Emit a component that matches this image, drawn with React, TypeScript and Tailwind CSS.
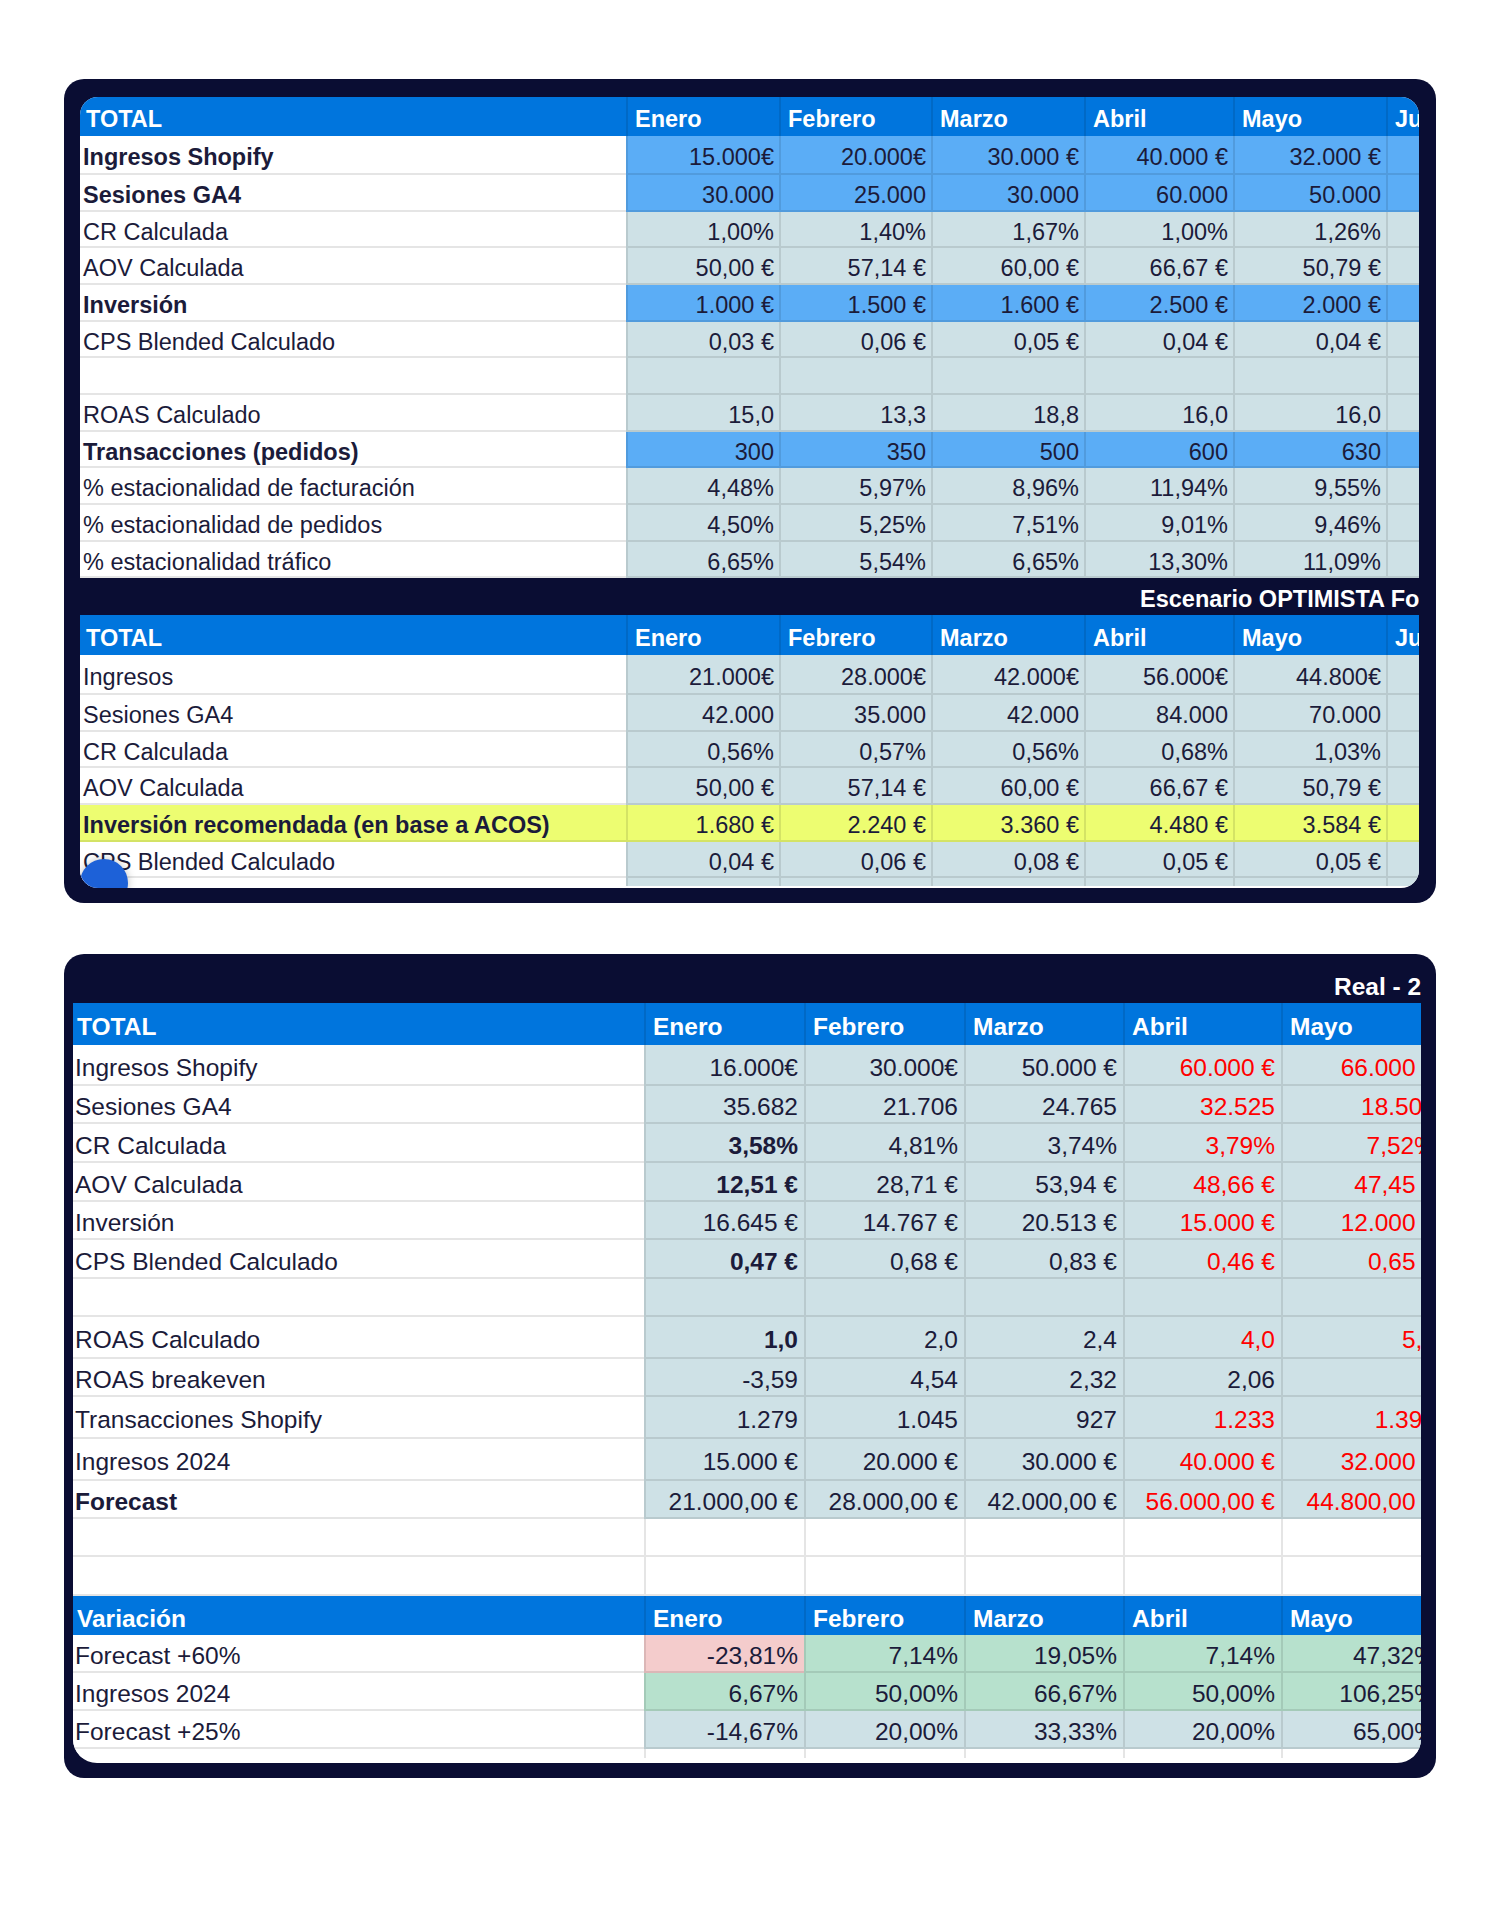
import React from "react";

type V = string | { t: string; b?: boolean; red?: boolean; bg?: string };

type RowDef =
  | { type: "head"; h: string; label: string; cols: string[] }
  | { type: "band"; h: string; text: string; pad: string }
  | {
      type: "data";
      h: string;
      label: string;
      lb?: boolean;
      labelBg?: string;
      bg: string;
      vals: V[];
      noBorder?: boolean;
    };

interface Cfg {
  labelW: string;
  colW: string[];
  labelPad: string;
  headPad: string;
  valPad: string;
  vpad: string;
}

function Sheet({ cfg, rows }: { cfg: Cfg; rows: RowDef[] }) {
  return (
    <div className="flex flex-col">
      {rows.map((r, i) => {
        if (r.type === "band") {
          return (
            <div
              key={i}
              className={`${r.h} shrink-0 flex items-center ${cfg.vpad} ${r.pad} bg-[#0a0d33] text-white font-bold whitespace-nowrap`}
            >
              {r.text}
            </div>
          );
        }
        if (r.type === "head") {
          return (
            <div key={i} className={`${r.h} shrink-0 flex bg-[#0075dd] text-white font-bold`}>
              <div className={`${cfg.labelW} shrink-0 flex items-center ${cfg.vpad} ${cfg.headPad} whitespace-nowrap`}>
                {r.label}
              </div>
              {cfg.colW.map((w, j) => (
                <div
                  key={j}
                  className={`${w} shrink-0 flex items-center ${cfg.vpad} pl-[7px] border-l-2 border-black/10 whitespace-nowrap overflow-hidden`}
                >
                  {r.cols[j] ?? ""}
                </div>
              ))}
            </div>
          );
        }
        const bb = r.noBorder ? "" : "border-b-2";
        return (
          <div key={i} className={`${r.h} shrink-0 flex`}>
            <div
              className={`${cfg.labelW} shrink-0 flex items-center ${cfg.vpad} ${cfg.labelPad} ${bb} border-black/10 whitespace-nowrap ${r.labelBg ?? "bg-white"} ${r.lb ? "font-bold" : ""}`}
            >
              {r.label}
            </div>
            {cfg.colW.map((w, j) => {
              const v = r.vals[j];
              const o = typeof v === "string" ? { t: v } : v ?? { t: "" };
              return (
                <div
                  key={j}
                  className={`${w} shrink-0 flex items-center justify-end ${cfg.vpad} ${cfg.valPad} border-l-2 ${bb} border-black/10 whitespace-nowrap ${o.bg ?? r.bg} ${o.b ? "font-bold" : ""} ${o.red ? "text-[#ff0000]" : ""}`}
                >
                  {o.t}
                </div>
              );
            })}
          </div>
        );
      })}
    </div>
  );
}

const BLUE = "bg-[#5badf6]";
const CYAN = "bg-[#cee1e6]";
const YEL = "bg-[#edfd71]";
const WHITE = "bg-white";
const PINK = "bg-[#f4cccc]";
const GREEN = "bg-[#b7e1cd]";

const months6 = ["Enero", "Febrero", "Marzo", "Abril", "Mayo", "Junio"];
const months5 = ["Enero", "Febrero", "Marzo", "Abril", "Mayo"];

const cfg1: Cfg = {
  labelW: "w-[546px]",
  colW: ["w-[153px]", "w-[152px]", "w-[153px]", "w-[149px]", "w-[153px]", "w-[153px]"],
  labelPad: "pl-[3px]",
  headPad: "pl-[6px]",
  valPad: "pr-[5px]",
  vpad: "pt-[7px]",
};

const rows1: RowDef[] = [
  { type: "head", h: "h-[39px]", label: "TOTAL", cols: months6 },
  { type: "data", h: "h-[39px]", label: "Ingresos Shopify", lb: true, bg: BLUE, vals: ["15.000€", "20.000€", "30.000 €", "40.000 €", "32.000 €", ""] },
  { type: "data", h: "h-[37px]", label: "Sesiones GA4", lb: true, bg: BLUE, vals: ["30.000", "25.000", "30.000", "60.000", "50.000", ""] },
  { type: "data", h: "h-[36px]", label: "CR Calculada", bg: CYAN, vals: ["1,00%", "1,40%", "1,67%", "1,00%", "1,26%", ""] },
  { type: "data", h: "h-[37px]", label: "AOV Calculada", bg: CYAN, vals: ["50,00 €", "57,14 €", "60,00 €", "66,67 €", "50,79 €", ""] },
  { type: "data", h: "h-[37px]", label: "Inversión", lb: true, bg: BLUE, vals: ["1.000 €", "1.500 €", "1.600 €", "2.500 €", "2.000 €", ""] },
  { type: "data", h: "h-[36px]", label: "CPS Blended Calculado", bg: CYAN, vals: ["0,03 €", "0,06 €", "0,05 €", "0,04 €", "0,04 €", ""] },
  { type: "data", h: "h-[37px]", label: "", bg: CYAN, vals: [] },
  { type: "data", h: "h-[37px]", label: "ROAS Calculado", bg: CYAN, vals: ["15,0", "13,3", "18,8", "16,0", "16,0", ""] },
  { type: "data", h: "h-[36px]", label: "Transacciones (pedidos)", lb: true, bg: BLUE, vals: ["300", "350", "500", "600", "630", ""] },
  { type: "data", h: "h-[37px]", label: "% estacionalidad de facturación", bg: CYAN, vals: ["4,48%", "5,97%", "8,96%", "11,94%", "9,55%", ""] },
  { type: "data", h: "h-[37px]", label: "% estacionalidad de pedidos", bg: CYAN, vals: ["4,50%", "5,25%", "7,51%", "9,01%", "9,46%", ""] },
  { type: "data", h: "h-[36px]", label: "% estacionalidad tráfico", bg: CYAN, vals: ["6,65%", "5,54%", "6,65%", "13,30%", "11,09%", ""] },
  { type: "band", h: "h-[37px]", text: "Escenario OPTIMISTA Forecast 2025", pad: "pl-[1060px]" },
  { type: "head", h: "h-[40px]", label: "TOTAL", cols: months6 },
  { type: "data", h: "h-[40px]", label: "Ingresos", bg: CYAN, vals: ["21.000€", "28.000€", "42.000€", "56.000€", "44.800€", ""] },
  { type: "data", h: "h-[37px]", label: "Sesiones GA4", bg: CYAN, vals: ["42.000", "35.000", "42.000", "84.000", "70.000", ""] },
  { type: "data", h: "h-[36px]", label: "CR Calculada", bg: CYAN, vals: ["0,56%", "0,57%", "0,56%", "0,68%", "1,03%", ""] },
  { type: "data", h: "h-[37px]", label: "AOV Calculada", bg: CYAN, vals: ["50,00 €", "57,14 €", "60,00 €", "66,67 €", "50,79 €", ""] },
  { type: "data", h: "h-[37px]", label: "Inversión recomendada (en base a ACOS)", lb: true, labelBg: YEL, bg: YEL, vals: ["1.680 €", "2.240 €", "3.360 €", "4.480 €", "3.584 €", ""] },
  { type: "data", h: "h-[36px]", label: "CPS Blended Calculado", bg: CYAN, vals: ["0,04 €", "0,06 €", "0,08 €", "0,05 €", "0,05 €", ""] },
  { type: "data", h: "h-[37px]", label: "", bg: CYAN, vals: [] },
];

const cfg2: Cfg = {
  labelW: "w-[571px]",
  colW: ["w-[160px]", "w-[160px]", "w-[159px]", "w-[158px]", "w-[161px]"],
  labelPad: "pl-[2px]",
  headPad: "pl-[4px]",
  valPad: "pr-[6px]",
  vpad: "pt-[7px]",
};

const R = (t: string) => ({ t, red: true });
const B = (t: string) => ({ t, b: true });

const rows2: RowDef[] = [
  { type: "band", h: "h-[39px]", text: "Real - 2025", pad: "pl-[1261px]" },
  { type: "head", h: "h-[42px]", label: "TOTAL", cols: months5 },
  { type: "data", h: "h-[41px]", label: "Ingresos Shopify", bg: CYAN, vals: ["16.000€", "30.000€", "50.000 €", R("60.000 €"), R("66.000 €")] },
  { type: "data", h: "h-[38px]", label: "Sesiones GA4", bg: CYAN, vals: ["35.682", "21.706", "24.765", R("32.525"), R("18.506")] },
  { type: "data", h: "h-[39px]", label: "CR Calculada", bg: CYAN, vals: [B("3,58%"), "4,81%", "3,74%", R("3,79%"), R("7,52%")] },
  { type: "data", h: "h-[39px]", label: "AOV Calculada", bg: CYAN, vals: [B("12,51 €"), "28,71 €", "53,94 €", R("48,66 €"), R("47,45 €")] },
  { type: "data", h: "h-[38px]", label: "Inversión", bg: CYAN, vals: ["16.645 €", "14.767 €", "20.513 €", R("15.000 €"), R("12.000 €")] },
  { type: "data", h: "h-[39px]", label: "CPS Blended Calculado", bg: CYAN, vals: [B("0,47 €"), "0,68 €", "0,83 €", R("0,46 €"), R("0,65 €")] },
  { type: "data", h: "h-[38px]", label: "", bg: CYAN, vals: [] },
  { type: "data", h: "h-[42px]", label: "ROAS Calculado", bg: CYAN, vals: [B("1,0"), "2,0", "2,4", R("4,0"), R("5,5")] },
  { type: "data", h: "h-[38px]", label: "ROAS breakeven", bg: CYAN, vals: ["-3,59", "4,54", "2,32", "2,06", ""] },
  { type: "data", h: "h-[42px]", label: "Transacciones Shopify", bg: CYAN, vals: ["1.279", "1.045", "927", R("1.233"), R("1.392")] },
  { type: "data", h: "h-[42px]", label: "Ingresos 2024", bg: CYAN, vals: ["15.000 €", "20.000 €", "30.000 €", R("40.000 €"), R("32.000 €")] },
  { type: "data", h: "h-[38px]", label: "Forecast", lb: true, bg: CYAN, vals: ["21.000,00 €", "28.000,00 €", "42.000,00 €", R("56.000,00 €"), R("44.800,00 €")] },
  { type: "data", h: "h-[38px]", label: "", bg: WHITE, vals: [] },
  { type: "data", h: "h-[39px]", label: "", bg: WHITE, vals: [] },
  { type: "head", h: "h-[39px]", label: "Variación", cols: months5 },
  { type: "data", h: "h-[38px]", label: "Forecast +60%", bg: GREEN, vals: [{ t: "-23,81%", bg: PINK }, "7,14%", "19,05%", "7,14%", "47,32%"] },
  { type: "data", h: "h-[38px]", label: "Ingresos 2024", bg: GREEN, vals: ["6,67%", "50,00%", "66,67%", "50,00%", "106,25%"] },
  { type: "data", h: "h-[38px]", label: "Forecast +25%", bg: CYAN, vals: ["-14,67%", "20,00%", "33,33%", "20,00%", "65,00%"] },
  { type: "data", h: "h-[9px]", label: "", bg: WHITE, vals: [], noBorder: true },
];

export default function App() {
  return (
    <div className="w-[1500px] h-[1908px] bg-white overflow-hidden font-['Liberation_Sans',Arial,sans-serif] text-[#1b1b3a]">
      {/* Card 1 */}
      <div className="mt-[79px] ml-[64px] w-[1372px] h-[824px] rounded-[20px] bg-[#0a0d33] pt-[18px] pl-[16px] pr-[17px]">
        <div className="relative h-[791px] w-full bg-white rounded-[18px] overflow-hidden text-[23.5px]">
          <div className="h-[789px] overflow-hidden">
            <Sheet cfg={cfg1} rows={rows1} />
          </div>
          <div className="absolute left-[0px] top-[762px] w-[48px] h-[48px] rounded-full bg-[#1d61d8] shadow-[0_0_8px_rgba(0,0,0,0.25)]" />
        </div>
      </div>

      {/* Card 2 */}
      <div className="mt-[51px] ml-[64px] w-[1372px] h-[824px] rounded-[20px] bg-[#0a0d33] pt-[10px] pl-[9px] pr-[15px]">
        <div className="h-[799px] w-full bg-white rounded-b-[24px] overflow-hidden text-[24.5px]">
          <Sheet cfg={cfg2} rows={rows2} />
        </div>
      </div>
    </div>
  );
}
